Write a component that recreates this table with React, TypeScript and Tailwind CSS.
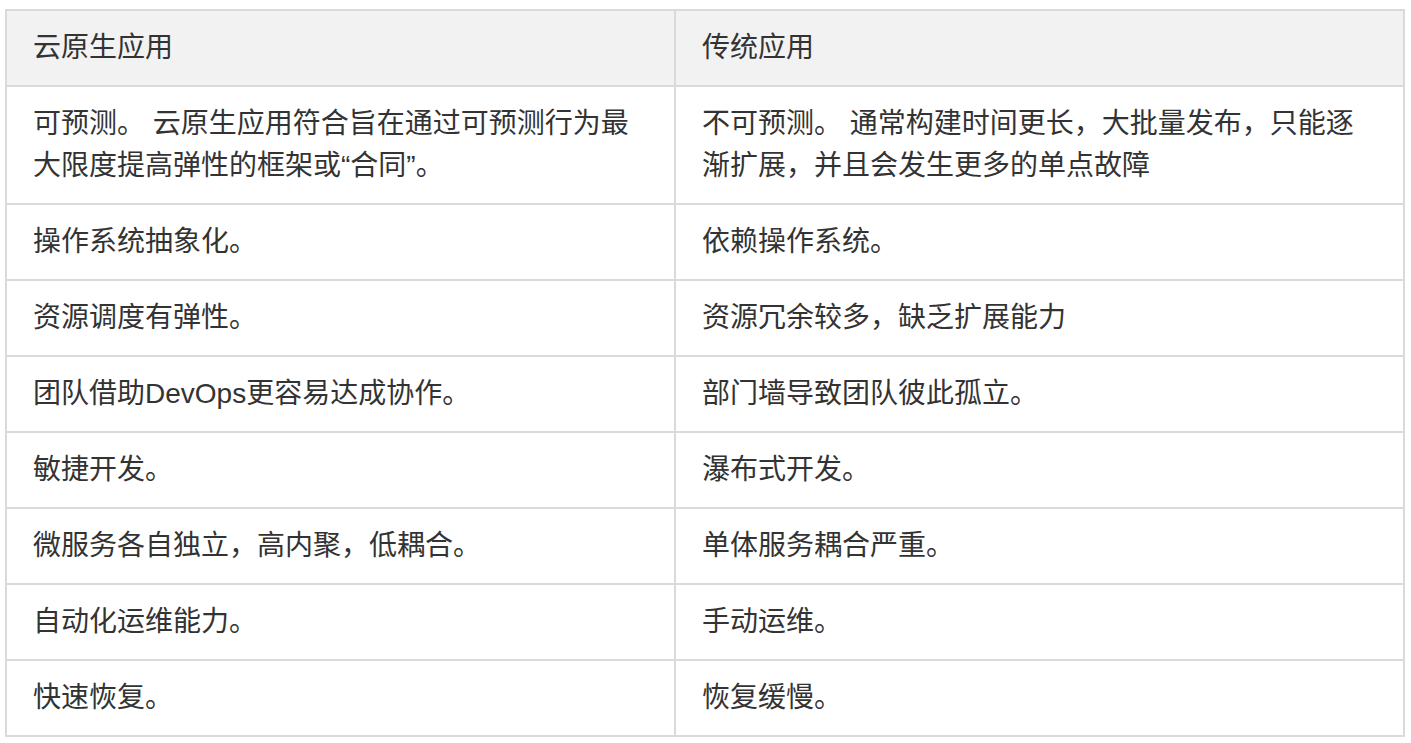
import React from "react";

const rows: [string, string][] = [
  [
    "可预测。 云原生应用符合旨在通过可预测行为最大限度提高弹性的框架或“合同”。",
    "不可预测。 通常构建时间更长，大批量发布，只能逐渐扩展，并且会发生更多的单点故障",
  ],
  ["操作系统抽象化。", "依赖操作系统。"],
  ["资源调度有弹性。", "资源冗余较多，缺乏扩展能力"],
  ["团队借助DevOps更容易达成协作。", "部门墙导致团队彼此孤立。"],
  ["敏捷开发。", "瀑布式开发。"],
  ["微服务各自独立，高内聚，低耦合。", "单体服务耦合严重。"],
  ["自动化运维能力。", "手动运维。"],
  ["快速恢复。", "恢复缓慢。"],
];

export default function App() {
  return (
    <div
      className="min-h-screen bg-white pl-[5px] pt-[9px] text-[#333333]"
      style={{ fontFamily: '"Liberation Sans", Arial, "Noto Sans CJK SC", sans-serif' }}
    >
      <div className="w-[1400px] border-2 border-[#dadada] text-[28px] leading-[42px]">
        <div className="flex border-b-2 border-[#dadada] bg-[#f2f2f2]">
          <div className="w-[669px] shrink-0 border-r-2 border-[#dadada] px-[26px] py-[16px]">云原生应用</div>
          <div className="flex-1 px-[26px] py-[16px]">传统应用</div>
        </div>
        {rows.map(([a, b], i) => (
          <div
            key={i}
            className={`flex ${i < rows.length - 1 ? "border-b-2 border-[#dadada]" : ""}`}
          >
            <div className="w-[669px] shrink-0 border-r-2 border-[#dadada] px-[26px] py-[16px]">{a}</div>
            <div className="flex-1 px-[26px] py-[16px]">{b}</div>
          </div>
        ))}
      </div>
    </div>
  );
}
